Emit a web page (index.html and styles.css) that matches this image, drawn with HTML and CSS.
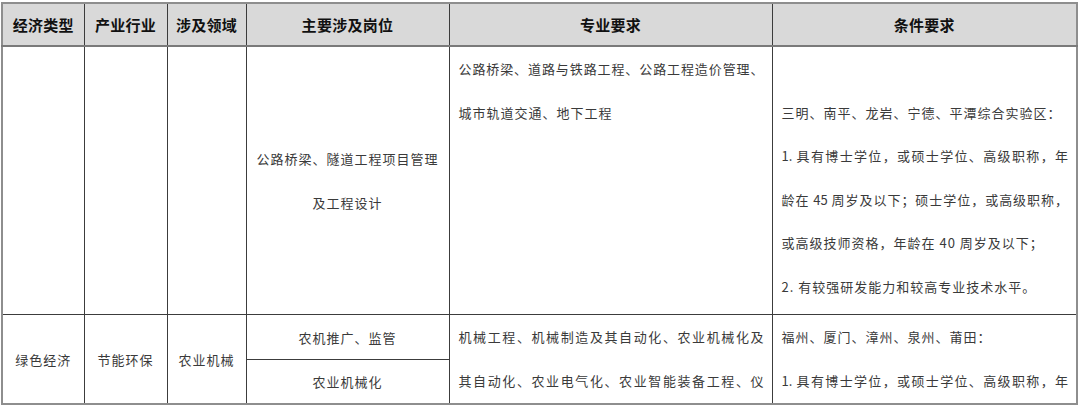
FILE: index.html
```html
<!DOCTYPE html>
<html lang="zh-CN">
<head>
<meta charset="utf-8">
<title>经济类型表</title>
<link rel="stylesheet" href="styles.css">
</head>
<body>
<table class="grid">
  <colgroup>
    <col class="c1"><col class="c2"><col class="c3"><col class="c4"><col class="c5"><col class="c6">
  </colgroup>
  <thead>
    <tr class="head">
      <th>经济类型</th>
      <th>产业行业</th>
      <th>涉及领域</th>
      <th>主要涉及岗位</th>
      <th>专业要求</th>
      <th>条件要求</th>
    </tr>
  </thead>
  <tbody>
    <tr class="row1">
      <td></td>
      <td></td>
      <td></td>
      <td class="center">
        <div class="line">公路桥梁、隧道工程项目管理</div>
        <div class="line">及工程设计</div>
      </td>
      <td class="text">
        <div class="line full">公路桥梁、道路与铁路工程、公路工程造价管理、</div>
        <div class="line">城市轨道交通、地下工程</div>
      </td>
      <td class="text">
        <div class="line gap"></div>
        <div class="line">三明、南平、龙岩、宁德、平潭综合实验区：</div>
        <div class="line full">1. 具有博士学位，或硕士学位、高级职称，年</div>
        <div class="line full">龄在 45 周岁及以下；硕士学位，或高级职称，</div>
        <div class="line">或高级技师资格，年龄在 40 周岁及以下；</div>
        <div class="line">2. 有较强研发能力和较高专业技术水平。</div>
      </td>
    </tr>
    <tr class="row2a">
      <td class="center" rowspan="2">绿色经济</td>
      <td class="center" rowspan="2">节能环保</td>
      <td class="center" rowspan="2">农业机械</td>
      <td class="center">农机推广、监管</td>
      <td class="text" rowspan="2">
        <div class="line full">机械工程、机械制造及其自动化、农业机械化及</div>
        <div class="line full">其自动化、农业电气化、农业智能装备工程、仪</div>
      </td>
      <td class="text" rowspan="2">
        <div class="line">福州、厦门、漳州、泉州、莆田：</div>
        <div class="line full">1. 具有博士学位，或硕士学位、高级职称，年</div>
      </td>
    </tr>
    <tr class="row2b">
      <td class="center">农业机械化</td>
    </tr>
  </tbody>
</table>
</body>
</html>
```

FILE: styles.css
```css
html, body {
  margin: 0;
  padding: 0;
  background: #ffffff;
}

body {
  font-family: "Noto Sans CJK SC", "Noto Sans", sans-serif;
  color: #3a3a3a;
  overflow: hidden;
}

.grid {
  margin: 2px 0 0 1px;
  width: 1075px;
  table-layout: fixed;
  border-collapse: collapse;
  border: 2px solid #8e8e8e;
}

.c1 { width: 82px; }
.c2 { width: 83px; }
.c3 { width: 79px; }
.c4 { width: 203px; }
.c5 { width: 323px; }
.c6 { width: 305px; }

.grid th,
.grid td {
  border: 1px solid #3c3c3c;
  padding: 0;
  font-size: 13px;
  letter-spacing: 1px;
}

.head th {
  height: 41px;
  background: #d9d9d9;
  color: #111;
  font-weight: 700;
  font-size: 15px;
  letter-spacing: 0.3px;
  text-align: center;
  vertical-align: middle;
  border-bottom: 2px solid #7a7a7a;
}

.row1 td { height: 267px; }
.row2a td { height: 44px; }
.row2b td { height: 43px; }

.center {
  text-align: center;
  vertical-align: middle;
}

.text {
  vertical-align: top;
  padding: 0 8px 0 9px !important;
  text-align: left;
}

.line {
  line-height: 43.6px;
  white-space: nowrap;
}

.row2a .line,
.row2b .line {
  line-height: 43.5px;
}

.center .line {
  line-height: 43.5px;
}

.full {
  text-align: justify;
  text-align-last: justify;
  letter-spacing: 0;
}

.gap {
  height: 43.6px;
}
```
